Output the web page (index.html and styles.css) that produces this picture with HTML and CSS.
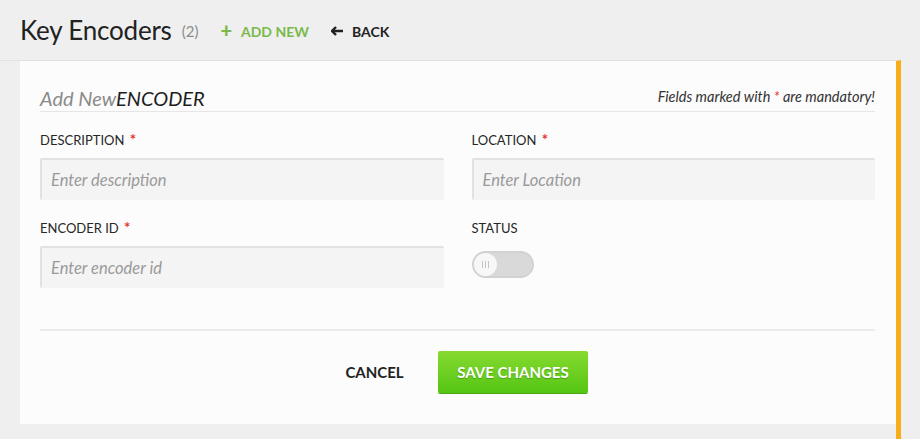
FILE: index.html
```html
<!DOCTYPE html>
<html>
<head>
<meta charset="utf-8">
<link rel="stylesheet" href="styles.css">
</head>
<body>
<header class="topbar">
  <h1 class="page-title">Key Encoders</h1>
  <span class="count">(2)</span>
  <a class="link add-link"><span class="plus">+</span>ADD NEW</a>
  <a class="link back-link"><svg class="arrow" width="12" height="10" viewBox="0 0 12 10"><path d="M5 1 L1 5 L5 9 M1 5 H12" fill="none" stroke="#222" stroke-width="2.4"/></svg>BACK</a>
</header>
<main class="main">
  <section class="card">
    <div class="card-head">
      <h2 class="form-title"><span class="muted">Add New</span>ENCODER</h2>
      <p class="note">Fields marked with <span class="req">*</span> are mandatory!</p>
    </div>
    <div class="form-grid">
      <div class="field">
        <label class="label">DESCRIPTION <span class="req star">*</span></label>
        <div class="input">Enter description</div>
      </div>
      <div class="field">
        <label class="label">LOCATION <span class="req star">*</span></label>
        <div class="input">Enter Location</div>
      </div>
      <div class="field">
        <label class="label">ENCODER ID <span class="req star">*</span></label>
        <div class="input">Enter encoder id</div>
      </div>
      <div class="field">
        <label class="label">STATUS</label>
        <div class="toggle-wrap">
          <div class="toggle"><span class="knob"><i></i><i></i><i></i></span></div>
        </div>
      </div>
    </div>
    <div class="actions">
      <button class="btn-cancel">CANCEL</button>
      <button class="btn-save">SAVE CHANGES</button>
    </div>
  </section>
</main>
</body>
</html>
```
FILE: styles.css
```css
html, body {
  margin: 0;
  padding: 0;
  height: 100%;
}
body {
  background: #efefef;
  font-family: Lato, "Open Sans", sans-serif;
  color: #242424;
  overflow: hidden;
}
.topbar {
  height: 60px;
  display: flex;
  align-items: center;
  padding-left: 20px;
  box-sizing: border-box;
}
.page-title {
  margin: 0;
  font-weight: 400;
  font-size: 26px;
  color: #222;
  letter-spacing: -0.2px;
}
.count {
  margin-left: 10px;
  font-size: 15px;
  color: #8c8c8c;
  margin-top: 2px;
}
.link {
  display: flex;
  align-items: center;
  font-weight: 700;
  font-size: 14px;
  margin-top: 2px;
}
.add-link {
  margin-left: 22px;
  color: #7ab94a;
}
.plus {
  font-size: 20px;
  margin-right: 9px;
  font-weight: 900;
  line-height: 1;
  margin-top: -2px;
}
.back-link {
  margin-left: 22px;
  color: #222;
}
.arrow {
  margin-right: 9px;
}
.main {
  width: 901px;
  box-sizing: border-box;
  border-top: 1px solid #e2e2e2;
  border-right: 5px solid #f9ad19;
  height: calc(100% - 60px);
  padding-left: 20px;
}
.card {
  background: #fcfcfc;
  padding: 21px 21px 31px 20px;
}
.card-head {
  display: flex;
  justify-content: space-between;
  align-items: flex-end;
  border-bottom: 1px solid #e6e6e6;
  height: 30px;
  box-sizing: border-box;
}
.form-title {
  margin: 0;
  font-weight: 400;
  font-style: italic;
  font-size: 20px;
  line-height: 26px;
  color: #1e1e1e;
}
.muted {
  color: #8a8a8a;
  font-weight: 400;
}
.note {
  margin: 0 0 6px;
  font-style: italic;
  font-size: 14.5px;
  color: #333;
}
.req {
  color: #e5322d;
}
.star {
  font-size: 15px;
  font-weight: 700;
  margin-left: 2px;
  line-height: 0;
}
.form-grid {
  display: grid;
  grid-template-columns: 1fr 1fr;
  column-gap: 28px;
  row-gap: 18px;
  margin-top: 18px;
}
.field {
  display: flex;
  flex-direction: column;
}
.label {
  font-size: 13px;
  line-height: 20px;
  height: 20px;
  margin-bottom: 8px;
  color: #262626;
}
.input {
  height: 42px;
  box-sizing: border-box;
  background: #f4f4f4;
  border-top: 2px solid #e2e2e2;
  border-left: 2px solid #e2e2e2;
  border-radius: 2px;
  padding-left: 9px;
  display: flex;
  align-items: center;
  font-style: italic;
  font-size: 16.5px;
  color: #9a9a9a;
}
.toggle-wrap {
  height: 42px;
  display: flex;
  align-items: center;
}
.toggle {
  width: 62px;
  height: 27px;
  box-sizing: border-box;
  background: #d9d9d9;
  border: 2px solid #d2d2d2;
  border-radius: 14px;
  position: relative;
  margin-top: -5px;
}
.knob {
  position: absolute;
  left: 0;
  top: 0;
  width: 23px;
  height: 23px;
  border-radius: 50%;
  background: #f7f7f7;
  display: flex;
  justify-content: center;
  align-items: center;
  gap: 2px;
}
.knob i {
  width: 1px;
  height: 7px;
  background: #c4c4c4;
}
.actions {
  margin-top: 41px;
  border-top: 2px solid #ebebeb;
  padding-top: 20px;
  display: flex;
  justify-content: center;
  gap: 16px;
}
.btn-cancel {
  width: 95px;
  height: 42px;
  border: 0;
  background: transparent;
  font-family: inherit;
  font-weight: 700;
  font-size: 15px;
  color: #222;
}
.btn-save {
  width: 150px;
  height: 42px;
  border: 0;
  border-radius: 2px;
  background: linear-gradient(#87da30, #54c514);
  box-shadow: 0 1px 0 #4aa611;
  font-family: inherit;
  font-weight: 700;
  font-size: 15px;
  color: #fff;
  text-shadow: 0 1px 1px rgba(0,0,0,0.25);
}
```
